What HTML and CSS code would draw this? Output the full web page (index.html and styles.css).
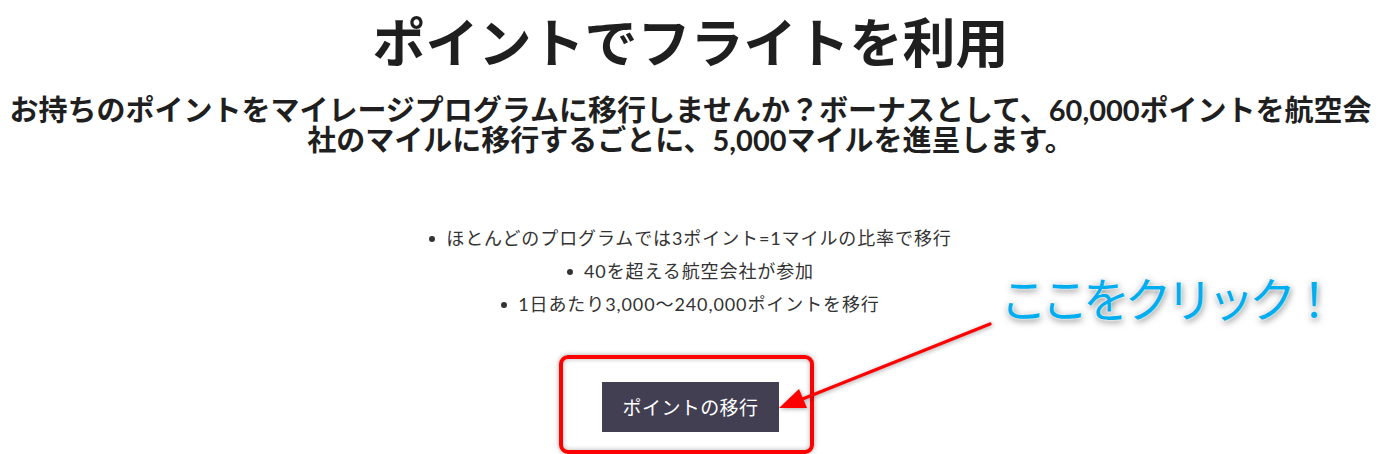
FILE: index.html
```html
<!DOCTYPE html>
<html lang="ja">
<head>
<meta charset="utf-8">
<title>ポイントでフライトを利用</title>
<link rel="stylesheet" href="styles.css">
</head>
<body>
<main class="page">
  <h1 class="title">ポイントでフライトを利用</h1>
  <p class="lead">お持ちのポイントをマイレージプログラムに移行しませんか？ボーナスとして、60,000ポイントを航空会社のマイルに移行するごとに、5,000マイルを進呈します。</p>
  <ul class="features">
    <li>ほとんどのプログラムでは3ポイント=1マイルの比率で移行</li>
    <li>40を超える航空会社が参加</li>
    <li>1日あたり3,000～240,000ポイントを移行</li>
  </ul>
  <div class="highlight">
    <a class="btn" href="#">ポイントの移行</a>
  </div>
</main>
<div class="callout">ここをクリック！</div>
<svg class="arrow" width="1381" height="454" viewBox="0 0 1381 454" aria-hidden="true">
  <line x1="990" y1="324" x2="800" y2="400" stroke="#ff0000" stroke-width="3.2" stroke-linecap="round"/>
  <polygon points="779,408 807,408 799,389" fill="#ff0000"/>
</svg>
</body>
</html>
```
FILE: styles.css
```css
html, body {
  margin: 0;
  padding: 0;
  background: #ffffff;
}
body {
  font-family: Lato, "Noto Sans CJK JP", sans-serif;
  color: #222222;
  position: relative;
  width: 1381px;
  height: 454px;
  overflow: hidden;
}
.page {
  display: flex;
  flex-direction: column;
  align-items: center;
  padding: 0 8px;
}
.title {
  margin: 10px 0 0;
  font-family: "Noto Sans CJK JP", sans-serif;
  font-size: 53px;
  line-height: 60px;
  font-weight: 700;
  color: #1f1f1f;
  text-align: center;
}
.lead {
  margin: 25px 0 0;
  font-family: Lato, "Noto Sans CJK JP", sans-serif;
  font-size: 29px;
  line-height: 30px;
  font-weight: 700;
  color: #1f1f1f;
  text-align: center;
}
.features {
  margin: 67px 0 0;
  padding: 0;
  list-style: none;
  display: flex;
  flex-direction: column;
  align-items: center;
  font-family: Lato, "Noto Sans CJK JP", sans-serif;
  font-size: 18px;
  letter-spacing: 0.9px;
  line-height: 33px;
  color: #333333;
}
.features li {
  display: flex;
  align-items: center;
  gap: 11px;
}
.features li::before {
  content: "";
  width: 6px;
  height: 6px;
  border-radius: 50%;
  background: #333333;
}
.highlight {
  margin-top: 34px;
  margin-right: 8px;
  border: 4px solid #ff0000;
  border-radius: 9px;
  padding: 23px 31px 18px 39px;
  box-shadow: 0 0 5px rgba(0, 0, 0, 0.35), inset 0 0 5px rgba(0, 0, 0, 0.3);
}
.btn {
  display: block;
  width: 177px;
  height: 50px;
  line-height: 50px;
  background: #433f53;
  color: #ffffff;
  text-align: center;
  text-decoration: none;
  font-family: "Noto Sans CJK JP", sans-serif;
  font-size: 19px;
  letter-spacing: 0.4px;
}
.callout {
  position: absolute;
  left: 1000px;
  top: 265px;
  font-family: "Noto Sans CJK JP", sans-serif;
  font-size: 47px;
  line-height: 64px;
  color: #00aeef;
  letter-spacing: -5.5px;
  text-shadow: 0 0 2px #ffffff, 0 0 2px #ffffff, 1px 2px 7px rgba(0, 0, 0, 0.55);
}
.arrow {
  position: absolute;
  left: 0;
  top: 0;
  pointer-events: none;
  filter: drop-shadow(1px 1px 2px rgba(0, 0, 0, 0.35));
}
```
